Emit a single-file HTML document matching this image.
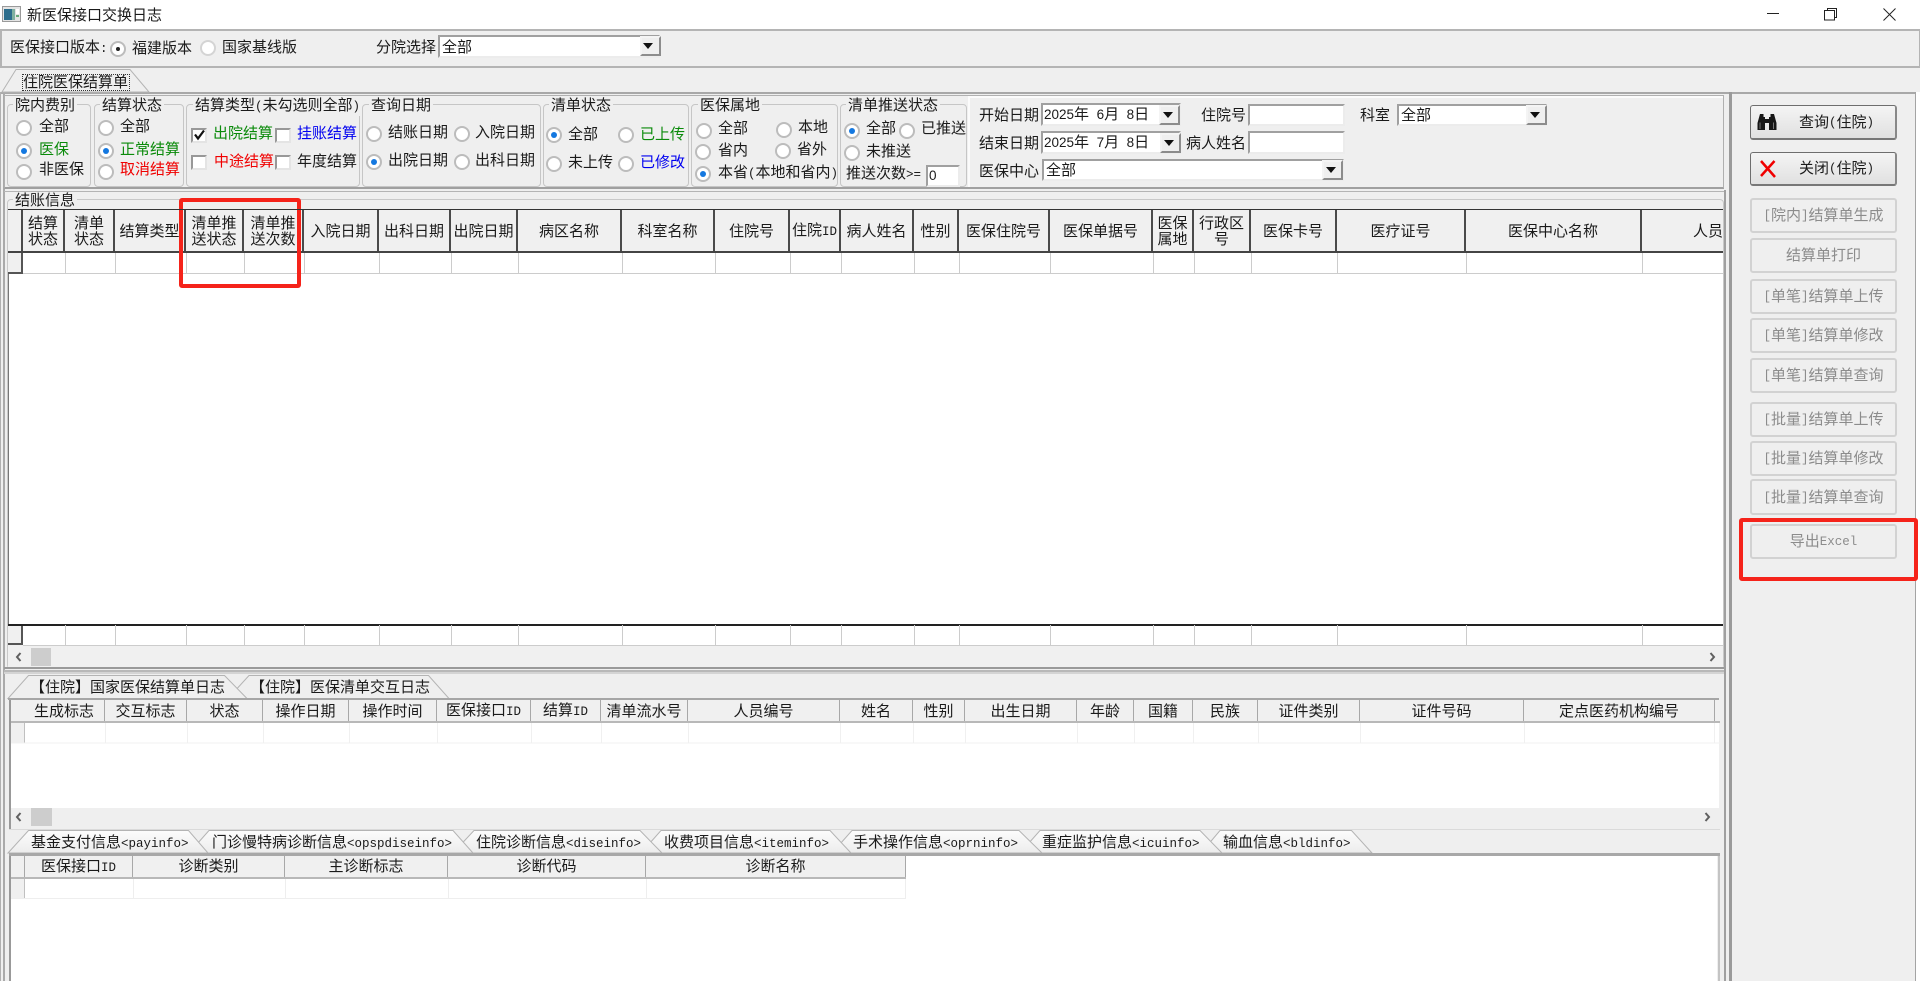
<!DOCTYPE html>
<html lang="zh"><head><meta charset="utf-8"><title>新医保接口交换日志</title>
<style>
html,body{margin:0;padding:0;width:1920px;height:981px;overflow:hidden;background:#fff}
body{position:relative;font:15px/18px "Liberation Sans","Noto Sans CJK SC",sans-serif;color:#1a1a1a;filter:blur(.3px)}
.a{position:absolute;box-sizing:border-box}
.t{position:absolute;white-space:pre;line-height:18px;height:18px}
.m{font-family:"Liberation Mono",monospace;font-size:12.5px}
.d{font-family:"Liberation Sans",sans-serif;font-size:13.5px;word-spacing:3.75px}
.g{color:#0a8a0a}.b{color:#0000f0}.e{color:#f00000}
.r{position:absolute;box-sizing:border-box;width:16px;height:16px;border-radius:50%;border:2px solid #bcbcbc;background:#fff}
.r.on::after{content:"";position:absolute;left:3px;top:3px;width:6px;height:6px;border-radius:50%;background:#1478e0}
.r.k::after{background:#222;left:4px;top:4px;width:4px;height:4px}
.c{position:absolute;box-sizing:border-box;width:16px;height:15px;background:#fff;border:2px solid;border-color:#989898 #e4e4e4 #e4e4e4 #989898}
.gp{position:absolute;box-sizing:border-box;border:1px solid #c6c6c6;border-radius:4px;top:104px;height:83px}
.lg{position:absolute;white-space:pre;line-height:18px;top:97px;background:#efefef;padding:0 2px;margin-left:-2px}
.i{position:absolute;box-sizing:border-box;background:#fff;border:2px solid;border-color:#a0a0a0 #ececec #ececec #a0a0a0}
.db{position:absolute;box-sizing:border-box;width:21px;background:#efefef;border:2px solid;border-color:#f4f4f4 #8c8c8c #8c8c8c #f4f4f4}
.ar{position:absolute;width:0;height:0;border-left:5px solid transparent;border-right:5px solid transparent;border-top:6px solid #111}
.bt{position:absolute;box-sizing:border-box;left:1750px;width:147px;border:2px solid #d2d2d2;border-radius:3px;background:#efefef;color:#8c8c8c;text-align:center;display:flex;align-items:center;justify-content:center;white-space:pre;padding-top:1px}
.bt.on{border:1px solid #6e6e6e;border-bottom:2px solid #777;border-right:2px solid #888;background:linear-gradient(#f4f4f4,#e0e0e0);color:#1a1a1a;justify-content:flex-start;padding-left:48px}
.h{position:absolute;box-sizing:border-box;top:0;display:flex;align-items:center;justify-content:center;text-align:center;white-space:nowrap;line-height:15.7px;background:#f0f0f0}
.g1 .h{height:43px;border-right:2px solid #4a4a4a;padding-top:2px}
.g2 .h{height:22px;border-right:1px solid #a8a8a8;line-height:18px}
.g2.up .h{padding-top:1px}
.box{position:absolute;overflow:hidden;left:0}
svg{position:absolute;left:0;top:0;overflow:visible}
</style></head><body>

<!-- backgrounds -->
<div class="a" style="left:0;top:67px;width:1920px;height:914px;background:#efefef"></div>
<div class="a" style="left:0;top:29px;width:1920px;height:39px;background:#efefef;border:2px solid #b4b4b4;border-right-width:1px"></div>
<div class="a" style="left:0;top:92px;width:1915px;height:2px;background:#a8a8a8"></div>
<div class="a" style="left:1916px;top:92px;width:4px;height:889px;background:#fff"></div>
<div class="a" style="left:1915px;top:92px;width:1px;height:889px;background:#a4a4a4"></div>
<div class="a" style="left:1729px;top:92px;width:3px;height:889px;background:#9a9a9a"></div>
<div class="a" style="left:1724px;top:190px;width:2px;height:791px;background:#a0a0a0"></div>
<div class="a" style="left:0;top:92px;width:1px;height:889px;background:#b0b0b0"></div>
<div class="a" style="left:3px;top:92px;width:2px;height:889px;background:#aaa"></div>
<div class="a" style="left:4px;top:95px;width:1720px;height:94px;border:1px solid #b0b0b0;border-bottom:2px solid #a0a0a0"></div>
<div class="a" style="left:968px;top:96px;width:755px;height:2px;background:#fbfbfb"></div>
<div class="a" style="left:968px;top:96px;width:2px;height:91px;background:#fbfbfb"></div>
<div class="a" style="left:4px;top:191px;width:1720px;height:1px;background:#b4b4b4"></div>
<div class="a" style="left:7px;top:199px;width:1717px;height:470px;border:1px solid #c8c8c8;border-radius:4px"></div>

<!-- title bar -->
<svg width="20" height="18" style="left:2px;top:6px"><rect x=".5" y=".5" width="18" height="15" fill="#e4e4e4" stroke="#9a9a9a"/><rect x="2" y="3" width="8" height="11" fill="#2c6d8c"/><rect x="10" y="3" width="3" height="11" fill="#7fb0a0"/><rect x="14" y="3" width="3" height="5" fill="#fff"/><rect x="14" y="9" width="3" height="2" fill="#6a7"/></svg>
<div class="t" style="left:27px;top:7px">新医保接口交换日志</div>
<div class="a" style="left:1767px;top:13px;width:12px;height:1px;background:#222"></div>
<svg width="14" height="14" style="left:1824px;top:8px"><path d="M3.500 2.500V.5h9v9h-2M.5 2.500h10v9.500h-10z" fill="none" stroke="#222"/></svg>
<svg width="14" height="14" style="left:1883px;top:8px"><path d="M.5 .5L12.500 12.500M12.500 .5L.5 12.500" fill="none" stroke="#222"/></svg>

<!-- top panel -->
<div class="t" style="left:10px;top:39px">医保接口版本<span class="m">:</span></div>
<div class="r on k" style="left:110px;top:41px"></div>
<div class="t" style="left:132px;top:40px">福建版本</div>
<div class="r" style="left:200px;top:40px;border-color:#d4d4d4"></div>
<div class="t" style="left:222px;top:39px">国家基线版</div>
<div class="t" style="left:376px;top:39px">分院选择</div>
<div class="i" style="left:438px;top:35px;width:222px;height:23px"></div>
<div class="t" style="left:442px;top:39px">全部</div>
<div class="db" style="left:640px;top:36px;height:20px"></div>
<div class="ar" style="left:643px;top:43px"></div>

<!-- top tab -->
<svg width="200" height="30" style="left:0;top:0"><polygon points="2,92 16,69.500 130,69.500 149,92" fill="#efefef" stroke="#b4b4b4"/></svg>
<div class="t" style="left:23px;top:74px">住院医保结算单</div>
<div class="a" style="left:22px;top:74px;width:108px;height:17px;border:1px dotted #333"></div>

<!-- group boxes -->
<div class="gp" style="left:7px;width:84px"></div>
<div class="gp" style="left:94px;width:90px"></div>
<div class="gp" style="left:186px;width:174px"></div>
<div class="gp" style="left:362px;width:179px"></div>
<div class="gp" style="left:543px;width:146px"></div>
<div class="gp" style="left:691px;width:147px"></div>
<div class="gp" style="left:840px;width:127px"></div>
<div class="lg" style="left:15px">院内费别</div>
<div class="lg" style="left:102px">结算状态</div>
<div class="lg" style="left:195px">结算类型<span class="m">(</span>未勾选则全部<span class="m">)</span></div>
<div class="lg" style="left:371px">查询日期</div>
<div class="lg" style="left:551px">清单状态</div>
<div class="lg" style="left:700px">医保属地</div>
<div class="lg" style="left:848px">清单推送状态</div>

<!-- g1 -->
<div class="r" style="left:16px;top:120px"></div><div class="t" style="left:39px;top:118px">全部</div>
<div class="r on" style="left:16px;top:143px"></div><div class="t g" style="left:39px;top:141px">医保</div>
<div class="r" style="left:16px;top:164px"></div><div class="t" style="left:39px;top:161px">非医保</div>
<!-- g2 -->
<div class="r" style="left:98px;top:120px"></div><div class="t" style="left:120px;top:118px">全部</div>
<div class="r on" style="left:98px;top:143px"></div><div class="t g" style="left:120px;top:141px">正常结算</div>
<div class="r" style="left:98px;top:164px"></div><div class="t e" style="left:120px;top:161px">取消结算</div>
<!-- g3 -->
<div class="c" style="left:191px;top:128px"></div>
<svg width="14" height="12" style="left:193px;top:129px"><path d="M2 5.500L5 9.500L11 1.500" fill="none" stroke="#111" stroke-width="2.200"/></svg>
<div class="t g" style="left:213px;top:125px">出院结算</div>
<div class="c" style="left:275px;top:128px"></div>
<div class="t b" style="left:297px;top:125px">挂账结算</div>
<div class="c" style="left:191px;top:155px"></div>
<div class="t e" style="left:214px;top:153px">中途结算</div>
<div class="c" style="left:275px;top:155px"></div>
<div class="t" style="left:297px;top:153px">年度结算</div>
<!-- g4 -->
<div class="r" style="left:366px;top:126px"></div><div class="t" style="left:388px;top:124px">结账日期</div>
<div class="r" style="left:454px;top:126px"></div><div class="t" style="left:475px;top:124px">入院日期</div>
<div class="r on" style="left:366px;top:154px"></div><div class="t" style="left:388px;top:152px">出院日期</div>
<div class="r" style="left:454px;top:154px"></div><div class="t" style="left:475px;top:152px">出科日期</div>
<!-- g5 -->
<div class="r on" style="left:546px;top:127px"></div><div class="t" style="left:568px;top:126px">全部</div>
<div class="r" style="left:618px;top:127px"></div><div class="t g" style="left:640px;top:126px">已上传</div>
<div class="r" style="left:546px;top:156px"></div><div class="t" style="left:568px;top:154px">未上传</div>
<div class="r" style="left:618px;top:156px"></div><div class="t b" style="left:640px;top:154px">已修改</div>
<!-- g6 -->
<div class="r" style="left:696px;top:123px"></div><div class="t" style="left:718px;top:120px">全部</div>
<div class="r" style="left:776px;top:122px"></div><div class="t" style="left:798px;top:119px">本地</div>
<div class="r" style="left:695px;top:144px"></div><div class="t" style="left:718px;top:142px">省内</div>
<div class="r" style="left:775px;top:143px"></div><div class="t" style="left:797px;top:141px">省外</div>
<div class="r on" style="left:695px;top:166px"></div><div class="t" style="left:718px;top:164px">本省<span class="m">(</span>本地和省内<span class="m">)</span></div>
<!-- g7 -->
<div class="r on" style="left:844px;top:123px"></div><div class="t" style="left:866px;top:120px">全部</div>
<div class="r" style="left:899px;top:123px"></div><div class="t" style="left:921px;top:120px">已推送</div>
<div class="r" style="left:844px;top:145px"></div><div class="t" style="left:866px;top:143px">未推送</div>
<div class="t" style="left:846px;top:165px">推送次数<span class="m">&gt;=</span></div>
<div class="i" style="left:926px;top:165px;width:34px;height:22px"></div>
<div class="t d" style="left:929px;top:167px">0</div>

<!-- right form -->
<div class="t" style="left:979px;top:107px">开始日期</div>
<div class="i" style="left:1041px;top:103px;width:140px;height:23px"></div>
<div class="t" style="left:1044px;top:106px"><span class="d">2025</span>年<span class="d"> 6</span>月<span class="d"> 8</span>日</div>
<div class="db" style="left:1159px;top:105px;height:20px"></div><div class="ar" style="left:1163px;top:112px"></div>
<div class="t" style="left:979px;top:135px">结束日期</div>
<div class="i" style="left:1041px;top:131px;width:140px;height:23px"></div>
<div class="t" style="left:1044px;top:134px"><span class="d">2025</span>年<span class="d"> 7</span>月<span class="d"> 8</span>日</div>
<div class="db" style="left:1160px;top:133px;height:20px"></div><div class="ar" style="left:1164px;top:140px"></div>
<div class="t" style="left:979px;top:163px">医保中心</div>
<div class="i" style="left:1042px;top:159px;width:302px;height:22px"></div>
<div class="t" style="left:1046px;top:162px">全部</div>
<div class="db" style="left:1322px;top:160px;height:20px"></div><div class="ar" style="left:1326px;top:167px"></div>
<div class="t" style="left:1201px;top:107px">住院号</div>
<div class="i" style="left:1248px;top:104px;width:97px;height:22px"></div>
<div class="t" style="left:1186px;top:135px">病人姓名</div>
<div class="i" style="left:1248px;top:131px;width:97px;height:23px"></div>
<div class="t" style="left:1360px;top:107px">科室</div>
<div class="i" style="left:1397px;top:104px;width:150px;height:22px"></div>
<div class="t" style="left:1401px;top:107px">全部</div>
<div class="db" style="left:1526px;top:105px;height:20px"></div><div class="ar" style="left:1530px;top:112px"></div>

<!-- grid 1 -->
<div class="t" style="left:15px;top:192px;background:#efefef;padding:0 2px;margin-left:-2px">结账信息</div>
<div class="a" style="left:8px;top:209px;width:1715px;height:436px;background:#fff;border-left:1px solid #777"></div>
<div class="box g1" style="top:209px;width:1723px;height:65px">
<div class="a" style="left:8px;top:0;width:1715px;height:1px;background:#333;z-index:2"></div>
<div class="h" style="left:8px;width:15px"></div>
<div class="h" style="left:23px;width:42px">结算<br>状态</div>
<div class="h" style="left:65px;width:50px">清单<br>状态</div>
<div class="h" style="left:115px;width:71px">结算类型</div>
<div class="h" style="left:186px;width:58px">清单推<br>送状态</div>
<div class="h" style="left:244px;width:60px">清单推<br>送次数</div>
<div class="h" style="left:304px;width:75px">入院日期</div>
<div class="h" style="left:379px;width:72px">出科日期</div>
<div class="h" style="left:451px;width:67px">出院日期</div>
<div class="h" style="left:518px;width:104px">病区名称</div>
<div class="h" style="left:622px;width:93px">科室名称</div>
<div class="h" style="left:715px;width:75px">住院号</div>
<div class="h" style="left:790px;width:51px"><span>住院<span class="m">ID</span></span></div>
<div class="h" style="left:841px;width:73px">病人姓名</div>
<div class="h" style="left:914px;width:45px">性别</div>
<div class="h" style="left:959px;width:91px">医保住院号</div>
<div class="h" style="left:1050px;width:103px">医保单据号</div>
<div class="h" style="left:1153px;width:41px">医保<br>属地</div>
<div class="h" style="left:1194px;width:57px">行政区<br>号</div>
<div class="h" style="left:1251px;width:86px">医保卡号</div>
<div class="h" style="left:1337px;width:129px">医疗证号</div>
<div class="h" style="left:1466px;width:176px">医保中心名称</div>
<div class="h" style="left:1642px;width:82px;justify-content:flex-start;padding-left:51px;border-right:0">人员编号</div>
<div class="a" style="left:8px;top:42px;width:1715px;height:2px;background:#444"></div>
<div class="a" style="left:8px;top:44px;width:15px;height:21px;background:#f0f0f0;border-right:2px solid #555;border-bottom:2px solid #555"></div>
<svg width="1723" height="65"><path d="M65.500 44v20M115.500 44v20M186.500 44v20M244.500 44v20M304.500 44v20M379.500 44v20M451.500 44v20M518.500 44v20M622.500 44v20M715.500 44v20M790.500 44v20M841.500 44v20M914.500 44v20M959.500 44v20M1050.500 44v20M1153.500 44v20M1194.500 44v20M1251.500 44v20M1337.500 44v20M1466.500 44v20M1642.500 44v20M23 64.500H1723" stroke="#ccc" fill="none"/></svg>
</div>
<!-- fixed row grid 1 -->
<div class="a" style="left:8px;top:624px;width:1715px;height:2px;background:#222"></div>
<div class="a" style="left:8px;top:626px;width:15px;height:19px;background:#f0f0f0;border-right:2px solid #555;border-bottom:2px solid #555"></div>
<svg width="1723" height="22" style="top:625px"><path d="M65.500 0v20M115.500 0v20M186.500 0v20M244.500 0v20M304.500 0v20M379.500 0v20M451.500 0v20M518.500 0v20M622.500 0v20M715.500 0v20M790.500 0v20M841.500 0v20M914.500 0v20M959.500 0v20M1050.500 0v20M1153.500 0v20M1194.500 0v20M1251.500 0v20M1337.500 0v20M1466.500 0v20M1642.500 0v20M23 20.500H1723" stroke="#ccc" fill="none"/></svg>
<div class="a" style="left:8px;top:646px;width:1715px;height:21px;background:#f0f0f0"></div>
<div class="a" style="left:31px;top:648px;width:20px;height:18px;background:#cdcdcd"></div>
<svg width="10" height="10" style="left:15px;top:652px"><path d="M5.500 1L2 5l3.500 4" fill="none" stroke="#606060" stroke-width="2"/></svg>
<svg width="10" height="10" style="left:1708px;top:652px"><path d="M2.500 1L6 5l-3.500 4" fill="none" stroke="#606060" stroke-width="2"/></svg>
<div class="a" style="left:4px;top:667px;width:1720px;height:2px;background:#9a9a9a"></div>
<div class="a" style="left:4px;top:670px;width:1720px;height:2px;background:#b8b8b8"></div>
<div class="a" style="left:4px;top:672px;width:1720px;height:2px;background:#d4d4d4"></div>

<!-- lower tabs 1 -->
<svg width="500" height="720"><polygon points="228,698.500 249,675.500 428.500,675.500 449,698.500" fill="#efefef" stroke="#b4b4b4"/><polygon points="8,698.500 28.500,675.500 224.500,675.500 247,698.500" fill="#efefef" stroke="#b4b4b4"/></svg>
<div class="t" style="left:30px;top:679px">【住院】国家医保结算单日志</div>
<div class="t" style="left:250px;top:679px">【住院】医保清单交互日志</div>
<div class="a" style="left:8px;top:698px;width:1711px;height:2px;background:#a6a6a6"></div>

<!-- grid 2 -->
<div class="a" style="left:9px;top:700px;width:1710px;height:108px;background:#fff;border-left:2px solid #999"></div>
<div class="box g2 up" style="top:700px;width:1720px;height:44px">
<div class="h" style="left:11px;width:14px"></div>
<div class="h" style="left:24px;width:81px">生成标志</div>
<div class="h" style="left:105px;width:82px">交互标志</div>
<div class="h" style="left:187px;width:76px">状态</div>
<div class="h" style="left:263px;width:86px">操作日期</div>
<div class="h" style="left:349px;width:88px">操作时间</div>
<div class="h" style="left:437px;width:94px"><span>医保接口<span class="m">ID</span></span></div>
<div class="h" style="left:531px;width:70px"><span>结算<span class="m">ID</span></span></div>
<div class="h" style="left:601px;width:87px">清单流水号</div>
<div class="h" style="left:688px;width:152px">人员编号</div>
<div class="h" style="left:840px;width:73px">姓名</div>
<div class="h" style="left:913px;width:52px">性别</div>
<div class="h" style="left:965px;width:112px">出生日期</div>
<div class="h" style="left:1077px;width:57px">年龄</div>
<div class="h" style="left:1134px;width:59px">国籍</div>
<div class="h" style="left:1193px;width:65px">民族</div>
<div class="h" style="left:1258px;width:102px">证件类别</div>
<div class="h" style="left:1360px;width:164px">证件号码</div>
<div class="h" style="left:1524px;width:191px">定点医药机构编号</div>
<div class="h" style="left:1715px;width:5px;border-right:0"></div>
<div class="a" style="left:11px;top:21px;width:1709px;height:2px;background:#b8b8b8"></div>
<div class="a" style="left:11px;top:23px;width:14px;height:20px;background:#f0f0f0;border-right:1px solid #c0c0c0"></div>
<svg width="1720" height="44"><path d="M105.500 23v20M187.500 23v20M263.500 23v20M349.500 23v20M437.500 23v20M531.500 23v20M601.500 23v20M688.500 23v20M840.500 23v20M913.500 23v20M965.500 23v20M1077.500 23v20M1134.500 23v20M1193.500 23v20M1258.500 23v20M1360.500 23v20M1524.500 23v20M1714.500 23v20M11 43H1720" stroke="#f0f0f0" fill="none"/></svg>
</div>
<div class="a" style="left:9px;top:808px;width:1710px;height:21px;background:#efefef;border-left:2px solid #999"></div>
<div class="a" style="left:31px;top:808px;width:21px;height:18px;background:#cdcdcd"></div>
<svg width="10" height="10" style="left:15px;top:812px"><path d="M5.500 1L2 5l3.500 4" fill="none" stroke="#606060" stroke-width="2"/></svg>
<svg width="10" height="10" style="left:1703px;top:812px"><path d="M2.500 1L6 5l-3.500 4" fill="none" stroke="#606060" stroke-width="2"/></svg>
<div class="a" style="left:9px;top:829px;width:1711px;height:1px;background:#dadada"></div>

<!-- lower tabs 2 -->
<svg width="1400" height="860">
<defs><linearGradient id="tg" x1="0" y1="0" x2="0" y2="1"><stop offset="0" stop-color="#fcfcfc"/><stop offset="1" stop-color="#ececec"/></linearGradient></defs>
<g fill="url(#tg)" stroke="#b4b4b4">
<polygon points="1201,853 1220,830.500 1351.500,830.500 1372,853"/>
<polygon points="1020,853 1040,830.500 1200,830.500 1222,853"/>
<polygon points="832,853 852,830.500 1019,830.500 1042,853"/>
<polygon points="641,853 661,830.500 830,830.500 851,853"/>
<polygon points="453,853 474,830.500 640,830.500 662,853"/>
<polygon points="189,853 209,830.500 453,830.500 473,853"/>
<polygon points="8,853 28.500,830.500 188.500,830.500 208,853"/>
</g></svg>
<div class="t" style="left:31px;top:834px">基金支付信息<span class="m">&lt;payinfo&gt;</span></div>
<div class="t" style="left:212px;top:834px">门诊慢特病诊断信息<span class="m">&lt;opspdiseinfo&gt;</span></div>
<div class="t" style="left:476px;top:834px">住院诊断信息<span class="m">&lt;diseinfo&gt;</span></div>
<div class="t" style="left:664px;top:834px">收费项目信息<span class="m">&lt;iteminfo&gt;</span></div>
<div class="t" style="left:853px;top:834px">手术操作信息<span class="m">&lt;oprninfo&gt;</span></div>
<div class="t" style="left:1042px;top:834px">重症监护信息<span class="m">&lt;icuinfo&gt;</span></div>
<div class="t" style="left:1223px;top:834px">输血信息<span class="m">&lt;bldinfo&gt;</span></div>
<div class="a" style="left:9px;top:853px;width:1711px;height:3px;background:#a8a8a8"></div>

<!-- grid 3 -->
<div class="a" style="left:9px;top:856px;width:1708px;height:125px;background:#fff;border-left:2px solid #999"></div>
<div class="a" style="left:1718px;top:856px;width:2px;height:125px;background:#c4c4c4"></div>
<div class="box g2" style="top:856px;width:906px;height:44px">
<div class="h" style="left:11px;width:14px"></div>
<div class="h" style="left:25px;width:108px"><span>医保接口<span class="m">ID</span></span></div>
<div class="h" style="left:133px;width:152px">诊断类别</div>
<div class="h" style="left:285px;width:163px">主诊断标志</div>
<div class="h" style="left:448px;width:198px">诊断代码</div>
<div class="h" style="left:646px;width:260px">诊断名称</div>
<div class="a" style="left:11px;top:21px;width:895px;height:2px;background:#b8b8b8"></div>
<div class="a" style="left:11px;top:23px;width:14px;height:20px;background:#f0f0f0;border-right:1px solid #c0c0c0"></div>
<svg width="906" height="44"><path d="M133.500 23v20M285.500 23v20M448.500 23v20M646.500 23v20M905.500 23v20M11 42.500H906" stroke="#eee" fill="none"/></svg>
</div>

<!-- right buttons -->
<div class="bt on" style="top:105px;height:35px">查询<span class="m">(</span>住院<span class="m">)</span></div>
<svg width="20" height="17" style="left:1757px;top:114px"><path d="M3 0h3.500v3h1.500v13H.5v-7zM12 3h1.500V0H17l2.500 9v7H12zM8 5h4v4H8z" fill="#161616"/><path d="M3 8.500V15M16.500 8.500V15" stroke="#777" fill="none"/></svg>
<div class="bt on" style="top:152px;height:34px">关闭<span class="m">(</span>住院<span class="m">)</span></div>
<svg width="19" height="18" style="left:1759px;top:160px"><path d="M2 1L16 17M15.500 1L2 16" stroke="#f00000" stroke-width="2.500" fill="none"/></svg>
<div class="bt" style="top:198px;height:35px"><span class="m">[</span>院内<span class="m">]</span>结算单生成</div>
<div class="bt" style="top:238px;height:35px">结算单打印</div>
<div class="bt" style="top:279px;height:35px"><span class="m">[</span>单笔<span class="m">]</span>结算单上传</div>
<div class="bt" style="top:318px;height:35px"><span class="m">[</span>单笔<span class="m">]</span>结算单修改</div>
<div class="bt" style="top:358px;height:35px"><span class="m">[</span>单笔<span class="m">]</span>结算单查询</div>
<div class="bt" style="top:402px;height:35px"><span class="m">[</span>批量<span class="m">]</span>结算单上传</div>
<div class="bt" style="top:441px;height:35px"><span class="m">[</span>批量<span class="m">]</span>结算单修改</div>
<div class="bt" style="top:479px;height:36px"><span class="m">[</span>批量<span class="m">]</span>结算单查询</div>
<div class="bt" style="top:524px;height:35px">导出<span class="m">Excel</span></div>

<!-- red annotations -->
<div class="a" style="left:179px;top:198px;width:122px;height:90px;border:4px solid #f5231a;border-radius:3px"></div>
<div class="a" style="left:1739px;top:518px;width:179px;height:63px;border:4px solid #f5231a;border-radius:3px"></div>
</body></html>
